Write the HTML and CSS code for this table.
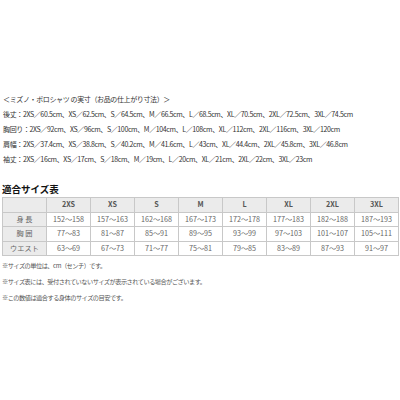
FILE: index.html
```html
<!DOCTYPE html>
<html lang="ja">
<head>
<meta charset="utf-8">
<link rel="stylesheet" href="styles.css">
</head>
<body>
<div class="page">
  <section class="spec">
    <p class="spec-title">＜ミズノ・ポロシャツ の実寸（お品の仕上がり寸法）＞</p>
    <p class="spec-line">後丈：2XS／60.5cm、XS／62.5cm、S／64.5cm、M／66.5cm、L／68.5cm、XL／70.5cm、2XL／72.5cm、3XL／74.5cm</p>
    <p class="spec-line">胸回り：2XS／92cm、XS／96cm、S／100cm、M／104cm、L／108cm、XL／112cm、2XL／116cm、3XL／120cm</p>
    <p class="spec-line">肩幅：2XS／37.4cm、XS／38.8cm、S／40.2cm、M／41.6cm、L／43cm、XL／44.4cm、2XL／45.8cm、3XL／46.8cm</p>
    <p class="spec-line">袖丈：2XS／16cm、XS／17cm、S／18cm、M／19cm、L／20cm、XL／21cm、2XL／22cm、3XL／23cm</p>
  </section>
  <h2 class="size-title">適合サイズ表</h2>
  <table class="size-table">
    <thead>
      <tr><th></th><th>2XS</th><th>XS</th><th>S</th><th>M</th><th>L</th><th>XL</th><th>2XL</th><th>3XL</th></tr>
    </thead>
    <tbody>
      <tr><th>身 長</th><td>152～158</td><td>157～163</td><td>162～168</td><td>167～173</td><td>172～178</td><td>177～183</td><td>182～188</td><td>187～193</td></tr>
      <tr><th>胸 囲</th><td>77～83</td><td>81～87</td><td>85～91</td><td>89～95</td><td>93～99</td><td>97～103</td><td>101～107</td><td>105～111</td></tr>
      <tr><th>ウエスト</th><td>63～69</td><td>67～73</td><td>71～77</td><td>75～81</td><td>79～85</td><td>83～89</td><td>87～93</td><td>91～97</td></tr>
    </tbody>
  </table>
  <section class="notes">
    <p class="note">※サイズの単位は、cm（センチ）です。</p>
    <p class="note">※サイズ表には、受付されていないサイズが表示されている場合がございます。</p>
    <p class="note">※この数値は適合する身体のサイズの目安です。</p>
  </section>
</div>
</body>
</html>
```

FILE: styles.css
```css
html, body {
  margin: 0;
  padding: 0;
  background: #ffffff;
}

.page {
  padding: 92px 1px 0 2px;
  font-family: "Noto Sans CJK JP", "Noto Sans", sans-serif;
  color: #333333;
}

.spec p {
  margin: 0;
  font-size: 7px;
  letter-spacing: -0.37px;
  line-height: 15px;
  white-space: nowrap;
  padding-left: 1px;
}

.size-title {
  margin: 15px 0 0 0;
  font-size: 9.5px;
  line-height: 14px;
  font-weight: bold;
  color: #111111;
}

.size-table {
  margin-top: 1px;
  width: 397px;
  border-collapse: collapse;
  table-layout: fixed;
  font-size: 7.2px;
  color: #666666;
}

.size-table th,
.size-table td {
  border: 1.5px solid #c8c8c8;
  height: 13.5px;
  padding: 0;
  text-align: center;
  line-height: 13px;
}

.size-table thead th {
  background: #ebebeb;
  font-weight: bold;
  color: #555555;
}

.size-table tbody th {
  background: #ebebeb;
  font-weight: normal;
  color: #666666;
}

.size-table td {
  background: #ffffff;
}

.notes {
  margin-top: 2px;
}

.note {
  margin: 0;
  font-size: 6.2px;
  letter-spacing: -0.5px;
  line-height: 16px;
  color: #555555;
}
```
